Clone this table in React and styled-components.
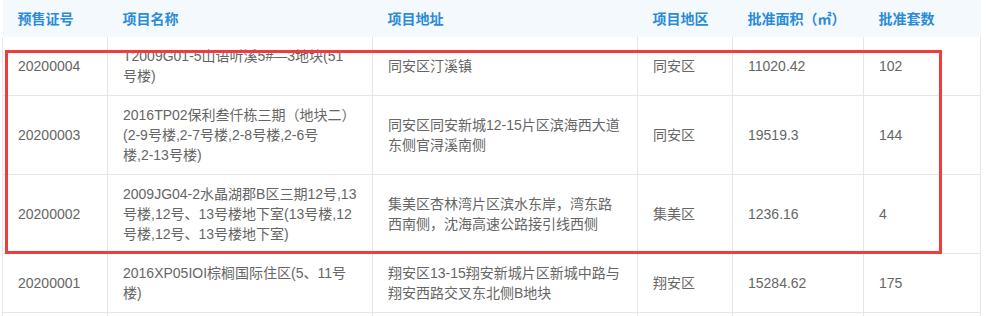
import React from "react";
import styled, { createGlobalStyle } from "styled-components";

const GlobalStyle = createGlobalStyle`
  html, body {
    margin: 0;
    padding: 0;
    background: #fff;
  }
  body {
    font-family: "Liberation Sans", "Noto Sans CJK SC", sans-serif;
  }
`;

const Wrapper = styled.div`
  position: relative;
  padding-left: 2px;
  width: 979px;
`;

const Table = styled.table`
  width: 979px;
  border-collapse: collapse;
  table-layout: fixed;
  font-size: 14px;
  line-height: 20px;
`;

const HeadRow = styled.tr`
  background: #f4f9fd;
`;

const Th = styled.th`
  height: 37px;
  padding: 0 15px;
  box-sizing: border-box;
  text-align: left;
  font-weight: bold;
  color: #2a8bd8;
  white-space: nowrap;
`;

const Td = styled.td`
  padding: 9px 15px;
  color: #666;
  vertical-align: middle;
  border: 1px solid #e6e6e6;
  border-top: none;
  white-space: nowrap;
  height: ${(p) => (p.$lines || 2) * 20}px;
`;

const Highlight = styled.div`
  position: absolute;
  left: 5px;
  top: 50px;
  width: 937px;
  height: 204px;
  box-sizing: border-box;
  border: 3px solid #f23b3b;
  pointer-events: none;
`;

const columns = [
  { title: "预售证号", width: 105 },
  { title: "项目名称", width: 265 },
  { title: "项目地址", width: 265 },
  { title: "项目地区", width: 95 },
  { title: "批准面积（㎡）", width: 131 },
  { title: "批准套数", width: 117 },
];

const rows = [
  {
    no: "20200004",
    name: ["T2009G01-5山语听溪5#—3地块(51", "号楼)"],
    addr: ["同安区汀溪镇"],
    area: "同安区",
    size: "11020.42",
    count: "102",
    lines: 2,
  },
  {
    no: "20200003",
    name: ["2016TP02保利叁仟栋三期（地块二）", "(2-9号楼,2-7号楼,2-8号楼,2-6号", "楼,2-13号楼)"],
    addr: ["同安区同安新城12-15片区滨海西大道", "东侧官浔溪南侧"],
    area: "同安区",
    size: "19519.3",
    count: "144",
    lines: 3,
  },
  {
    no: "20200002",
    name: ["2009JG04-2水晶湖郡B区三期12号,13", "号楼,12号、13号楼地下室(13号楼,12", "号楼,12号、13号楼地下室)"],
    addr: ["集美区杏林湾片区滨水东岸，湾东路", "西南侧，沈海高速公路接引线西侧"],
    area: "集美区",
    size: "1236.16",
    count: "4",
    lines: 3,
  },
  {
    no: "20200001",
    name: ["2016XP05IOI棕榈国际住区(5、11号", "楼)"],
    addr: ["翔安区13-15翔安新城片区新城中路与", "翔安西路交叉东北侧B地块"],
    area: "翔安区",
    size: "15284.62",
    count: "175",
    lines: 2,
  },
];

function Lines({ items }) {
  return items.map((t, i) => (
    <React.Fragment key={i}>
      {i > 0 && <br />}
      {t}
    </React.Fragment>
  ));
}

export default function App() {
  return (
    <>
      <GlobalStyle />
      <Wrapper>
        <Table>
          <colgroup>
            {columns.map((c) => (
              <col key={c.title} style={{ width: c.width }} />
            ))}
          </colgroup>
          <thead>
            <HeadRow>
              {columns.map((c) => (
                <Th key={c.title}>{c.title}</Th>
              ))}
            </HeadRow>
          </thead>
          <tbody>
            {rows.map((r) => (
              <tr key={r.no}>
                <Td $lines={r.lines}>{r.no}</Td>
                <Td $lines={r.lines}>
                  <Lines items={r.name} />
                </Td>
                <Td $lines={r.lines}>
                  <Lines items={r.addr} />
                </Td>
                <Td $lines={r.lines}>{r.area}</Td>
                <Td $lines={r.lines}>{r.size}</Td>
                <Td $lines={r.lines}>{r.count}</Td>
              </tr>
            ))}
            <tr>
              {columns.map((c) => (
                <Td key={c.title} $lines={2} />
              ))}
            </tr>
          </tbody>
        </Table>
        <Highlight />
      </Wrapper>
    </>
  );
}
